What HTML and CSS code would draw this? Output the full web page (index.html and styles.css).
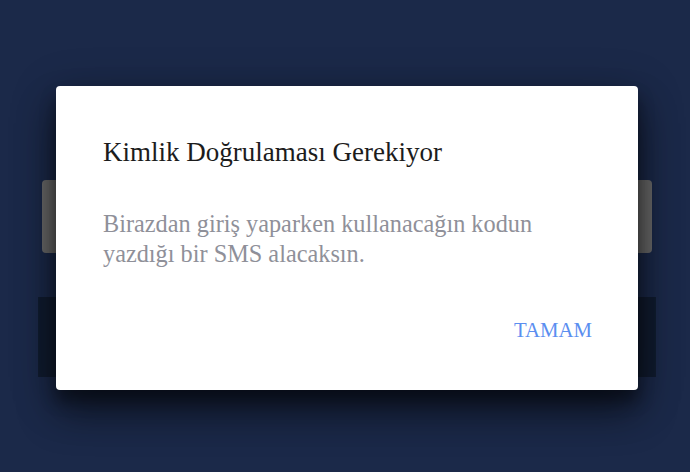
FILE: index.html
```html
<!DOCTYPE html>
<html lang="tr">
<head>
<meta charset="utf-8">
<title>Kimlik Doğrulaması</title>
<link rel="stylesheet" href="styles.css">
</head>
<body>
<div class="screen">
  <div class="field"></div>
  <div class="band"></div>
  <div class="dialog" role="dialog">
    <h2 class="dialog-title">Kimlik Doğrulaması Gerekiyor</h2>
    <p class="dialog-text">Birazdan giriş yaparken kullanacağın kodun yazdığı bir SMS alacaksın.</p>
    <div class="dialog-actions">
      <button class="dialog-btn">TAMAM</button>
    </div>
  </div>
</div>
</body>
</html>
```
FILE: styles.css
```css
html, body {
  margin: 0;
  padding: 0;
  height: 100%;
}
body {
  background: #1b2949;
  font-family: "Liberation Serif", "Times New Roman", serif;
  overflow: hidden;
}
.screen {
  position: relative;
  width: 690px;
  height: 472px;
  display: flex;
  flex-direction: column;
  padding-top: 180px;
  box-sizing: border-box;
}
.field {
  margin: 0 38px 0 42px;
  height: 73px;
  background: #6a6a6a;
  border-radius: 4px;
}
.band {
  margin: 44px 34px 0 38px;
  height: 80px;
  background: #111c30;
}
.dialog {
  position: absolute;
  left: 56px;
  top: 86px;
  width: 582px;
  height: 304px;
  box-sizing: border-box;
  background: #ffffff;
  border-radius: 4px;
  padding: 50px 46px 0 47px;
  box-shadow: 0 24px 38px rgba(0, 0, 0, 0.42), 0 9px 46px rgba(0, 0, 0, 0.3), 0 11px 15px rgba(0, 0, 0, 0.35);
  display: flex;
  flex-direction: column;
}
.dialog-title {
  margin: 0;
  font-size: 27px;
  line-height: 32px;
  font-weight: normal;
  color: #1c1c1c;
}
.dialog-text {
  margin: 41px 0 0;
  font-size: 24.3px;
  line-height: 30px;
  color: #8f9099;
  max-width: 470px;
}
.dialog-actions {
  margin-top: 49px;
  display: flex;
  justify-content: flex-end;
}
.dialog-btn {
  border: 0;
  background: none;
  padding: 0;
  font-family: inherit;
  font-size: 20.8px;
  line-height: 24px;
  color: #5b8ef0;
  cursor: pointer;
}
```
